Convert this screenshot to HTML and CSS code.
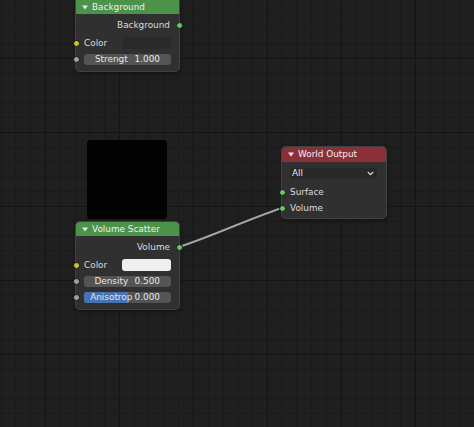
FILE: index.html
```html
<!DOCTYPE html>
<html>
<head>
<meta charset="utf-8">
<link rel="stylesheet" href="styles.css">
</head>
<body>
<div class="canvas">
  <svg class="links" width="474" height="427" viewBox="0 0 474 427">
    <path d="M179 247 C 215 235, 246 220, 282 208" stroke="#1a1a1a" stroke-width="3.5" fill="none"/>
    <path d="M179 247 C 215 235, 246 220, 282 208" stroke="#a3a3a3" stroke-width="2" fill="none"/>
  </svg>

  <div class="node node-bg">
    <div class="head green">
      <svg class="tri" width="6" height="5" viewBox="0 0 6 5"><path d="M0 0.5 L6 0.5 L3 4.5 Z" fill="#e8e8e8"/></svg>
      <span>Background</span>
    </div>
    <div class="body">
      <div class="row out"><span>Background</span><i class="sock green-s right"></i></div>
      <div class="row color"><i class="sock yellow-s left"></i><span>Color</span><div class="swatch dark"></div></div>
      <div class="row slider"><i class="sock gray-s left"></i><div class="field"><span class="lbl">Strengt</span><span class="val">1.000</span></div></div>
    </div>
  </div>

  <div class="preview"></div>

  <div class="node node-vs">
    <div class="head green">
      <svg class="tri" width="6" height="5" viewBox="0 0 6 5"><path d="M0 0.5 L6 0.5 L3 4.5 Z" fill="#e8e8e8"/></svg>
      <span>Volume Scatter</span>
    </div>
    <div class="body">
      <div class="row out"><span>Volume</span><i class="sock green-s right"></i></div>
      <div class="row color"><i class="sock yellow-s left"></i><span>Color</span><div class="swatch white"></div></div>
      <div class="row slider"><i class="sock gray-s left"></i><div class="field"><span class="lbl">Density</span><span class="val">0.500</span></div></div>
      <div class="row slider"><i class="sock gray-s left"></i><div class="field"><div class="fill" style="width:50%"></div><span class="lbl">Anisotrop</span><span class="val">0.000</span></div></div>
    </div>
  </div>

  <div class="node node-wo">
    <div class="head red">
      <svg class="tri" width="6" height="5" viewBox="0 0 6 5"><path d="M0 0.5 L6 0.5 L3 4.5 Z" fill="#e8e8e8"/></svg>
      <span>World Output</span>
    </div>
    <div class="body wo-body">
      <div class="dropdown"><span>All</span><svg width="7" height="5" viewBox="0 0 7 5"><path d="M0.8 1 L3.5 3.7 L6.2 1" stroke="#d8d8d8" stroke-width="1.2" fill="none"/></svg></div>
      <div class="row in"><i class="sock green-s left"></i><span>Surface</span></div>
      <div class="row in"><i class="sock green-s left"></i><span>Volume</span></div>
    </div>
  </div>
</div>
</body>
</html>
```

FILE: styles.css
```css
* { box-sizing: border-box; }
html, body { margin: 0; padding: 0; }
body { background: #1d1d1d; font-family: "DejaVu Sans", "Liberation Sans", sans-serif; }

.canvas {
  position: relative;
  width: 474px;
  height: 427px;
  overflow: hidden;
  background-color: #1f1f1f;
  background-image:
    linear-gradient(to right, #141414 1px, transparent 1px),
    linear-gradient(to bottom, #141414 1px, transparent 1px),
    linear-gradient(to right, #191919 1px, transparent 1px),
    linear-gradient(to bottom, #191919 1px, transparent 1px);
  background-size: 74px 74px, 74px 74px, 14.8px 14.8px, 14.8px 14.8px;
  background-position: 45px 0, 0 58px, 0.6px 0, 0 13.6px;
}

.links { position: absolute; left: 0; top: 0; }

.node {
  position: absolute;
  background: #303030;
  border-radius: 4px;
  box-shadow: 0 0 0 1px #424242, 1px 2px 5px rgba(0,0,0,0.45);
  color: #dddddd;
  font-size: 8.9px;
}
.node-bg { left: 76px; top: -4px; width: 103px; }
.node-bg .head { height: 18px; padding-top: 4px; }
.node-vs { left: 76px; top: 222px; width: 103px; }
.node-wo { left: 282px; top: 147px; width: 104px; }

.head {
  height: 14px;
  display: flex;
  align-items: center;
  gap: 4px;
  padding-left: 6px;
  border-radius: 4px 4px 0 0;
  color: #f0f0f0;
  line-height: 1;
}
.head.green { background: #4b934a; }
.head.red { background: #8b3039; height: 15px; }
.tri { display: block; flex: none; }

.body {
  display: flex;
  flex-direction: column;
  gap: 5px;
  padding: 4px 8px 6px 8px;
}
.row {
  position: relative;
  display: flex;
  align-items: center;
  height: 14px;
  line-height: 1;
}
.row.out { justify-content: flex-end; padding-right: 1px; }
.row.color { height: 12px; }
.row.slider { height: 11px; }

.sock {
  position: absolute;
  top: 50%;
  width: 7px;
  height: 7px;
  margin-top: -3.5px;
  border-radius: 50%;
  border: 1px solid #151515;
}
.sock.left { left: -11.5px; }
.sock.right { right: -11.5px; }
.green-s { background: #63c763; }
.yellow-s { background: #c7c729; }
.gray-s { background: #a1a1a1; }

.swatch {
  margin-left: auto;
  width: 49px;
  height: 12px;
  border-radius: 3px;
}
.swatch.dark { background: #2a2a2a; }
.swatch.white { background: #f0f0f0; }

.field {
  position: relative;
  flex: 1;
  height: 11px;
  display: flex;
  align-items: center;
  background: #545454;
  border-radius: 3px;
  padding: 0 11px 0 4px;
  overflow: hidden;
  color: #e6e6e6;
}
.fill {
  position: absolute;
  left: 0;
  top: 0;
  bottom: 0;
  background: #4772b3;
}
.lbl { position: relative; flex: 1; text-align: center; }
.val { position: relative; }

.wo-body { padding: 6px 9px 3px 8px; gap: 0; }
.dropdown {
  height: 11px;
  display: flex;
  align-items: center;
  justify-content: space-between;
  background: #282828;
  border-radius: 3px;
  padding: 0 3px 0 2px;
  color: #e6e6e6;
  line-height: 1;
  margin-bottom: 6px;
}
.dropdown svg { display: block; }
.row.in + .row.in { margin-top: 2px; }

.preview {
  position: absolute;
  left: 87px;
  top: 140px;
  width: 80px;
  height: 79px;
  background: #020202;
  border-radius: 4px;
}
```
